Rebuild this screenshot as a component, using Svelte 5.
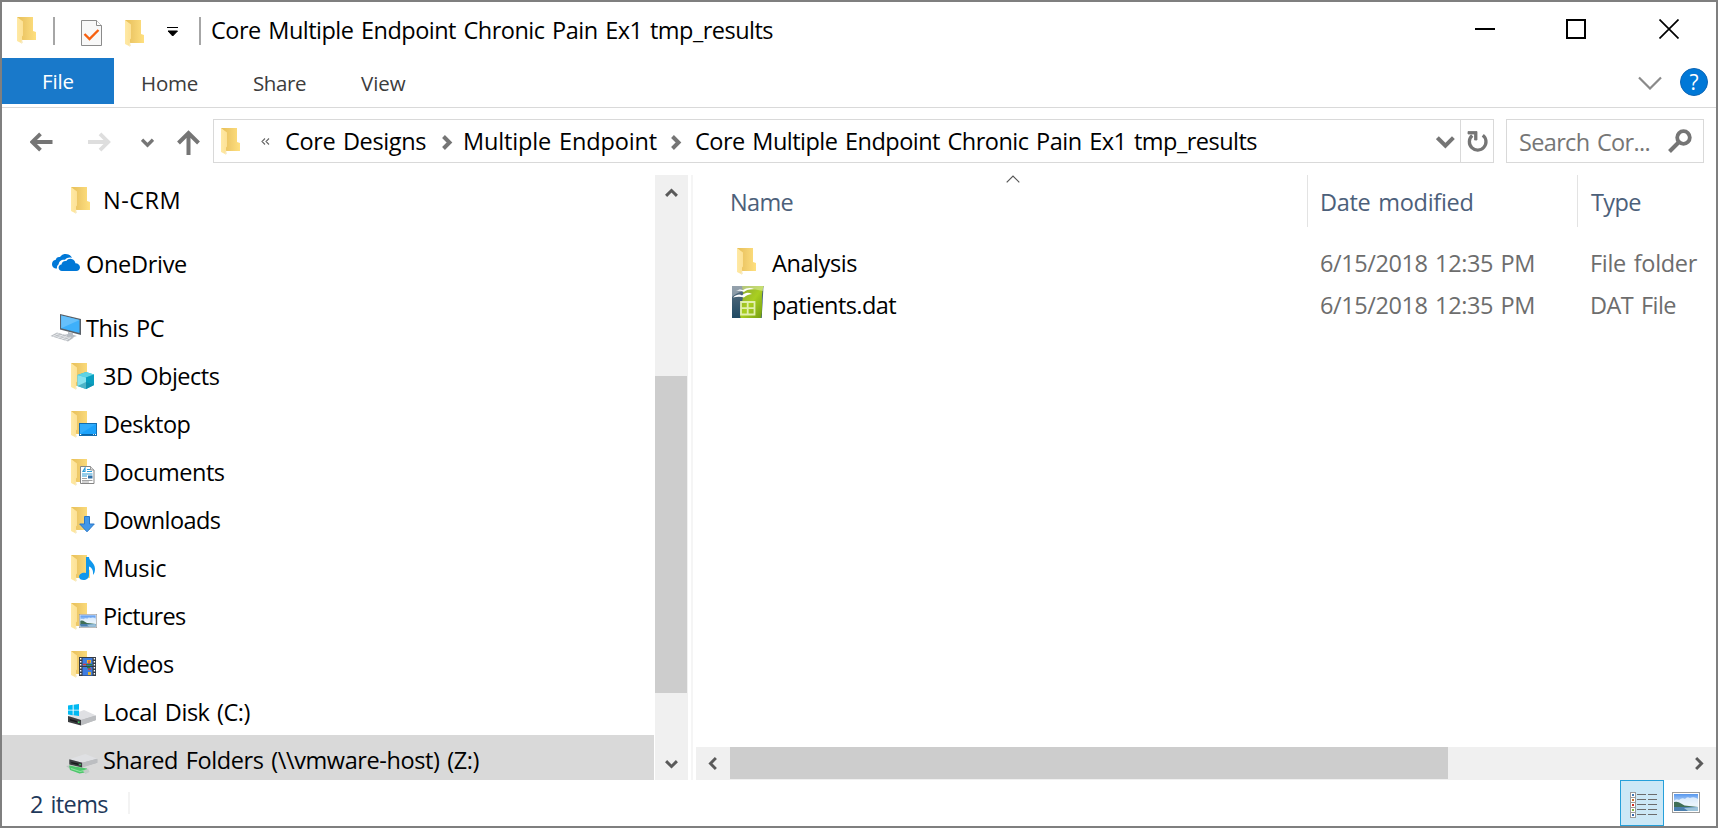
<script>
  const tree = [
    { name: 'N-CRM', icon: 'folder', level: 1, width: 78 },
    { name: 'OneDrive', icon: 'onedrive', level: 0, width: 101, gap: true },
    { name: 'This PC', icon: 'pc', level: 0, width: 78, gap: true },
    { name: '3D Objects', icon: 'objects', level: 1, width: 116.5 },
    { name: 'Desktop', icon: 'desktop', level: 1, width: 87.5 },
    { name: 'Documents', icon: 'documents', level: 1, width: 121.5 },
    { name: 'Downloads', icon: 'downloads', level: 1, width: 117.5 },
    { name: 'Music', icon: 'music', level: 1, width: 63.5 },
    { name: 'Pictures', icon: 'pictures', level: 1, width: 82.5 },
    { name: 'Videos', icon: 'videos', level: 1, width: 71 },
    { name: 'Local Disk (C:)', icon: 'disk', level: 1, width: 147 },
    { name: 'Shared Folders (\\\\vmware-host) (Z:)', icon: 'netdisk', level: 1, width: 376, selected: true }
  ];

  const files = [
    { name: 'Analysis', icon: 'folder', width: 85, date: '6/15/2018 12:35 PM', type: 'File folder', typeWidth: 107 },
    { name: 'patients.dat', icon: 'calc', width: 124, date: '6/15/2018 12:35 PM', type: 'DAT File', typeWidth: 86 }
  ];

  // Tracks a label in or out so that it takes the given advance width.
  function fit(node, width) {
    const count = node.textContent.length;
    const natural = node.getBoundingClientRect().width;
    node.style.letterSpacing = `${(width - natural) / count}px`;
  }
</script>

{#snippet scene(x, y, w, h)}
  <svg {x} {y} width={w} height={h} viewBox="0 0 28 21" preserveAspectRatio="none">
    <rect x=".5" y=".5" width="27" height="20" fill="#fff" stroke="#9b9b9b" />
    <rect x="2" y="2" width="24" height="17" fill="url(#sky)" />
    <path d="M2 9q2-3 5-1q3-3 6-1q2-3 5-1q4-2 8 1v8H2z" fill="#eef6fd" opacity=".8" />
    <path d="M2 10q4-1 7 1.500t8 2.500l9 1v1.500H2z" fill="#3f6f56" />
    <path d="M2 15h24v4H2z" fill="#4a7fae" />
    <path d="M12 16l14-1v4H16z" fill="#9cc3da" />
  </svg>
{/snippet}

{#snippet folder()}
  <path d="M5 4h16v14l3 1v8H9z" fill="url(#folderBack)" />
  <path d="M5 4l6 4.5v14l-1 1v7L5 28z" fill="url(#folderFront)" />
  <path d="M10 26l1 4-2 .6z" fill="#f7eccb" />
{/snippet}

{#snippet drive()}
  <path d="M2 22l16-6 12 5v4l-15 5-13-4z" fill="#b5b7ba" />
  <path d="M2 21l16-6 12 5.500-15 4.500z" fill="#dfe0e3" />
  <path d="M2 21l13 4v5.500L2 27z" fill="#3b3d40" />
  <path d="M15 25l15-4.500V25l-15 5.500z" fill="#bcbec1" />
  <path d="M4 24l7 2v1.500l-7-2z" fill="#17191b" />
  <path d="M12 26.500h1.500v1.500H12z" fill="#35d95b" />
{/snippet}

{#snippet icon(kind)}
  <svg class="icon" width="32" height="32" viewBox="0 0 32 32" aria-hidden="true">
    {#if kind === 'onedrive'}
      <path d="M8 21.500c-3.500 0-5-2-5-4.500 0-2.200 1.600-4 3.800-4.200C7 10.600 8.900 9.600 11 10c1.300-2 3.500-3 5.700-3 3 0 5.300 1.500 6.300 4-2.700-1-5.200-.2-7 1.700-3.500-.5-6.200 1.600-6.300 4.600-1.300.8-2 2.300-1.700 4.200z" fill="#0078d7" />
      <path d="M13 24c-2 0-3.400-1.400-3.400-3.200 0-1.700 1.200-3 2.900-3.200.1-2.500 2.400-4.100 4.800-3.600 1.200-1.800 3.200-2.600 5.200-2.100 2.200.4 3.700 2.200 3.900 4.400 2.600.1 4.600 1.700 4.600 4 0 2.100-1.600 3.700-3.700 3.700z" fill="#0078d7" />
    {:else if kind === 'pc'}
      <path d="M11 3l21 5v16L11 18.500z" fill="#596068" />
      <path d="M12.200 4.600l18.300 4.500v13L12.200 17.300z" fill="#3eb0fb" />
      <path d="M12.200 4.600l18.300 4.500-18.300 8.200z" fill="#66c0fb" />
      <path d="M19 21l5 1.200v1.500l4 1.300-5 1.500-8-2.500 4-1z" fill="#b6bcc3" />
      <path d="M8 21.500l17 5-6 4L1.500 25z" fill="#b9bdc2" />
      <path d="M7 23.200l14 4.200M4.500 24.500l14 4.300M10 22l-6 3.500M14 23.500l-6 4M18 24.700l-6 4M22 26l-6 4" stroke="#f4f5f6" stroke-width=".6" fill="none" />
    {:else if kind === 'disk'}
      {@render drive()}
      <path d="M2 10.500l4.700-.7v4.900H2zM7.600 9.700L13 9v5.700H7.600zM2 15.500h4.700v4.800L2 19.600zM7.600 15.500H13V21l-5.400-.7z" fill="#00b9f2" />
    {:else if kind === 'netdisk'}
      <path d="M0 23l6-1 3 4-3 1.500z" fill="#bcc5c1" />
      <path d="M3 22.500l18 3 .5 3.500-8 1.500L4 27z" fill="#4dc66b" />
      <path d="M5 25.500l9 3 6-1.500" stroke="#8fe49f" stroke-width="1.200" fill="none" />
      <path d="M17 28l5-2.500 1.500 3.500-4 2z" fill="#c3cbc8" />
      <g transform="translate(1.300 -2) scale(1 .87)">{@render drive()}</g>
    {:else if kind === 'calc'}
      <path d="M0 0h31.500l-1.800 32H0z" fill="url(#calcDark)" />
      <path d="M10 0h21.500c-1 5-1.600 7-1.600 12 0 6 .6 14-.9 20H8.500C7 25 9 19 10.500 14c1-4 .5-9-.5-14z" fill="url(#calcGreen)" />
      <path d="M0 0h31v5C20 1.500 8 4 0 11z" fill="#fff" opacity=".35" />
      <path d="M4 5c3-2 5-2 7-.8 3-2 7-3 11-1.200-5 0-8 1-10 3C9 4.500 7 4.500 4 5zM1 11.500c4-3.500 7-3.500 9-2C13 6.500 16 6 20 8c-4 .5-6 1.500-8 3.500-3-1-7-1-11 0z" fill="#fff" />
      <path d="M9 16h13.500v12.500H9zM9 22.200h13.500M15.700 16v12.500" fill="none" stroke="#e2f0ae" stroke-width="1.800" />
    {:else}
      {@render folder()}
      {#if kind === 'objects'}
        <path d="M11.500 16l8.500-3 8 2.500V26l-8 4-8.500-3z" fill="#22b5cf" />
        <path d="M11.500 16l8.500-3 8 2.500-8 3z" fill="#5fd3e4" />
        <path d="M11.500 16l8.500 2.500V30l-8.500-3z" fill="#88e2ef" />
        <path d="M20 18.500l8-3V26l-8 4z" fill="#0a9fc0" />
        <path d="M11.500 27l8.500-4 8 3-8 4z" fill="#14839f" opacity=".5" />
      {:else if kind === 'desktop'}
        <rect x="13.500" y="16.500" width="17" height="12" fill="#1ca2fb" stroke="#126db0" />
        <path d="M14 17h16L14 27z" fill="#44b5fd" opacity=".55" />
        <path d="M14 27.500h16" stroke="#0a66a8" />
        <path d="M14 27.500h1.200M27 27.500h.8M29 27.500h1" stroke="#fff" />
      {:else if kind === 'documents'}
        <path d="M14.500 11.500h10l3.500 3.500v13.500H14.500z" fill="#fff" stroke="#858585" />
        <path d="M24.500 11.500V15H28" fill="#ddd" stroke="#858585" stroke-width=".8" />
        <path d="M16.500 17l2.500-4v3.500h-2M21 14.500h3M21 16.500h5M16 19h10.500M16 21h5" stroke="#2c9bd6" fill="none" stroke-width="1.100" />
        <path d="M22 20.500h4.500v3H22z" fill="#3273a9" />
        <path d="M16 23.500h5M16 25.500h10.500M16 27h7" stroke="#9a9a9a" stroke-width=".9" />
      {:else if kind === 'downloads'}
        <path d="M18.500 13.500h5V21h4.800L21 28.800 13.700 21h4.800z" fill="#4297e8" stroke="#2877c9" />
      {:else if kind === 'music'}
        <path d="M20 6h3c0 4 6 5.500 6 12 0 2.500-.7 4.500-2 6 .5-4.500-.7-7-4-8.500V24c0 3.200-2.500 5-5.500 5-2.500 0-4.500-1.300-4.500-3.300 0-2.700 3.500-4.700 7-3.700z" fill="#0f97ec" />
      {:else if kind === 'pictures'}
        {@render scene(13, 15, 18, 14)}
      {:else if kind === 'videos'}
        <rect x="13" y="10" width="17" height="19" fill="#343b45" />
        <rect x="16.500" y="11" width="10" height="8" fill="#3f7de0" />
        <rect x="16.500" y="20" width="10" height="8.500" fill="#3f7de0" />
        <path d="M14.700 11v18M28.400 11v18" stroke="#fff" stroke-width="1.400" stroke-dasharray="1.500 1.500" />
        <path d="M21 13h4v3h-4zM22 25h3v3h-3z" fill="#e8b52d" />
        <path d="M17 17.500h4M23 13.500v4M22 22h3" stroke="#d93a34" stroke-width="1.300" />
        <path d="M20 17.800h6M21 20.500h3" stroke="#287f41" stroke-width="1.400" />
      {/if}
    {/if}
  </svg>
{/snippet}

{#snippet chevron(rotation, w, size)}
  <svg class="chevron" width={size} height={size} viewBox="0 0 12 12" aria-hidden="true">
    <path d="M1 3.800L6 8.800l5-5" transform="rotate({rotation} 6 6)" fill="none" stroke="currentColor" stroke-width={w} />
  </svg>
{/snippet}

<svg class="defs" width="0" height="0" aria-hidden="true">
  <defs>
    <linearGradient id="folderBack"><stop offset="0" stop-color="#e8bf56" /><stop offset=".45" stop-color="#f0cc6c" /><stop offset="1" stop-color="#ffe07f" /></linearGradient>
    <linearGradient id="folderFront"><stop offset="0" stop-color="#ffe9a4" /><stop offset="1" stop-color="#fce196" /></linearGradient>
    <linearGradient id="sky" x2="0" y2="1"><stop offset="0" stop-color="#5797ee" /><stop offset=".6" stop-color="#d4e9fb" /></linearGradient>
    <linearGradient id="calcDark" x2="0" y2="1"><stop offset="0" stop-color="#5c6f80" /><stop offset="1" stop-color="#1f4a63" /></linearGradient>
    <linearGradient id="calcGreen" x2="1" y2="1"><stop offset="0" stop-color="#8aa336" /><stop offset=".5" stop-color="#a9cf20" /><stop offset="1" stop-color="#6f9a0f" /></linearGradient>
  </defs>
</svg>

<div class="window">
  <header class="titlebar">
    <div class="quick-folder first">{@render icon('folder')}</div>
    <i class="bar"></i>
    <svg class="properties" width="22" height="29" viewBox="0 0 22 29" aria-hidden="true">
      <path d="M.5 2.500h15l5 5v20H.5z" fill="#f8f8f8" stroke="#8b8b8b" />
      <path d="M15.500 2.500V7.500h5" fill="#fff" stroke="#8b8b8b" />
      <path d="M3.500 16l5 5 9-9" fill="none" stroke="#f7600f" stroke-width="2.400" />
    </svg>
    <div class="quick-folder second">{@render icon('folder')}</div>
    <svg class="customize" width="12" height="10" viewBox="0 0 12 10" aria-hidden="true">
      <path d="M0 .500h11M1 4h9.500L5.700 9z" stroke="#000" stroke-width="1" />
    </svg>
    <i class="bar"></i>
    <h1 class="label"><span use:fit={562}>Core Multiple Endpoint Chronic Pain Ex1 tmp_results</span></h1>
    <div class="controls">
      <svg width="20" height="20" viewBox="0 0 20 20"><path d="M0 10h20" stroke="#000" stroke-width="2" /></svg>
      <svg width="20" height="20" viewBox="0 0 20 20"><path d="M1 1h18v18H1z" fill="none" stroke="#000" stroke-width="2" /></svg>
      <svg width="20" height="20" viewBox="0 0 20 20"><path d="M.5.500l19 19M19.500.500l-19 19" stroke="#000" stroke-width="1.700" /></svg>
    </div>
  </header>

  <nav class="ribbon">
    <button class="file"><span use:fit={32}>File</span></button>
    <button class="home"><span use:fit={57}>Home</span></button>
    <button class="share"><span use:fit={53}>Share</span></button>
    <button class="view"><span use:fit={44.5}>View</span></button>
    <svg class="expand" width="24" height="14" viewBox="0 0 24 14"><path d="M1 1.500l11 11 11-11" fill="none" stroke="#8a8a8a" stroke-width="2.200" /></svg>
    <span class="help">?</span>
  </nav>

  <div class="navbar">
    <svg class="arrow back" width="23" height="20" viewBox="0 0 23 20"><path d="M22.500 10H2.500M10.500 1.800L2.300 10l8.200 8.200" /></svg>
    <svg class="arrow forward" width="23" height="20" viewBox="0 0 23 20"><path d="M0 10h20M12 1.800l8.200 8.200-8.200 8.200" /></svg>
    <svg class="arrow recent" width="13" height="10" viewBox="0 0 13 10"><path d="M1 1.700l5.500 5.500L12 1.700" /></svg>
    <svg class="arrow up" width="24" height="25" viewBox="0 0 24 25"><path d="M11.500 25V3M1.500 13l10-10 10 10" /></svg>
    <div class="address">
      <div class="address-folder">{@render icon('folder')}</div>
      <svg class="more" width="9" height="7" viewBox="0 0 9 7"><path d="M4 .500L1 3.500l3 3M8 .500L5 3.500l3 3" fill="none" stroke="#666" stroke-width="1.100" /></svg>
      <span class="label crumb1"><span use:fit={141}>Core Designs</span></span>
      <svg class="arrow crumb-sep" width="11" height="15" viewBox="0 0 11 15"><path d="M1.500 1.500l6 6-6 6" /></svg>
      <span class="label crumb2"><span use:fit={194}>Multiple Endpoint</span></span>
      <svg class="arrow crumb-sep" width="11" height="15" viewBox="0 0 11 15"><path d="M1.500 1.500l6 6-6 6" /></svg>
      <span class="label crumb3"><span use:fit={562}>Core Multiple Endpoint Chronic Pain Ex1 tmp_results</span></span>
      <svg class="arrow history" width="19" height="13" viewBox="0 0 19 13"><path d="M1.400 1.700l8 8 8-8" /></svg>
      <div class="refresh">
        <svg width="21" height="22" viewBox="0 0 21 22"><path d="M15.800 4.200A8.300 8.300 0 1 1 5.200 4.500" fill="none" stroke="#757575" stroke-width="3.300" /><path d="M1 .500h9V9H7.500V3H1z" fill="#757575" stroke="#757575" stroke-width=".8" /></svg>
      </div>
    </div>
    <div class="search">
      <span class="label"><span use:fit={131}>Search Cor...</span></span>
      <svg width="24" height="24" viewBox="0 0 24 24"><circle cx="15.500" cy="8.500" r="6.300" fill="none" stroke="#757575" stroke-width="3.800" /><path d="M11 13L1.500 22.500" stroke="#757575" stroke-width="4" /></svg>
    </div>
  </div>

  <main>
    <aside>
      {#each tree as item}
        <div class="node" class:nested={item.level === 1} class:gap={item.gap} class:selected={item.selected}>
          {@render icon(item.icon)}
          <span class="label"><span use:fit={item.width}>{item.name}</span></span>
        </div>
      {/each}
    </aside>
    <div class="vscroll">
      <div class="step up-step">{@render chevron(180, 2.7, 13)}</div>
      <div class="thumb"></div>
      <div class="step down-step">{@render chevron(0, 2.7, 13)}</div>
    </div>
    <i class="splitter"></i>
    <section>
      <div class="columns">
        <div class="col name">
          <span class="label"><span use:fit={63}>Name</span></span>
          <svg class="sort" width="14" height="8" viewBox="0 0 14 8"><path d="M.7 7.300L7 1l6.300 6.300" fill="none" stroke="#555" stroke-width="1.200" /></svg>
        </div>
        <div class="col date"><span class="label"><span use:fit={153.500}>Date modified</span></span></div>
        <div class="col type"><span class="label"><span use:fit={50}>Type</span></span></div>
      </div>
      <div class="files">
        {#each files as file}
          <div class="file-row">
            <div class="cell name">{@render icon(file.icon)}<span class="label"><span use:fit={file.width}>{file.name}</span></span></div>
            <div class="cell date"><span class="label"><span use:fit={215}>{file.date}</span></span></div>
            <div class="cell type"><span class="label"><span use:fit={file.typeWidth}>{file.type}</span></span></div>
          </div>
        {/each}
      </div>
      <div class="hscroll">
        <div class="step start">{@render chevron(90, 2.7, 13)}</div>
        <div class="thumb"></div>
        <div class="step end">{@render chevron(-90, 2.7, 13)}</div>
      </div>
    </section>
  </main>

  <footer>
    <span class="label"><span use:fit={78}>2 items</span></span>
    <i class="status-sep"></i>
    <button class="view-button active" aria-label="Details">
      <svg width="28" height="27" viewBox="0 0 28 27">
        {#each ['#3f78b5', '#c66d28', '#cf2c20', '#7fb33f', '#3569ad'] as color, i}
          <rect x=".5" y={0.5 + i * 5} width="5" height="5" fill="#fff" stroke="#9b9b9b" />
          <rect x="2" y={2 + i * 5} width="2" height="2" fill={color} />
          <path d="M7 {2.5 + i * 5}h9M18 {2.5 + i * 5}h9" stroke="#6c6c6c" />
        {/each}
      </svg>
    </button>
    <button class="view-button" aria-label="Large icons">
      <svg width="28" height="21" viewBox="0 0 28 21">{@render scene(0, 0, 28, 21)}</svg>
    </button>
  </footer>
</div>

<style>
  :global(body) { margin: 0; background: #fff; }
  .defs { position: absolute; }
  .window {
    box-sizing: border-box;
    width: 1718px;
    height: 828px;
    border: 2px solid #7f7f7f;
    background: #fff;
    color: #000;
    display: flex;
    flex-direction: column;
    overflow: hidden;
    font-family: "Open Sans", "Noto Sans", sans-serif;
    font-size: 23.5px;
    line-height: 32px;
    word-spacing: 2px;
  }
  svg { display: block; flex: none; }
  i { display: block; flex: none; }
  button { font: inherit; color: inherit; border: 0; background: none; padding: 0; margin: 0; text-align: left; }
  .label { flex: none; white-space: pre; padding-top: 2px; }
  .icon { flex: none; }

  .titlebar { height: 56px; flex: none; display: flex; align-items: flex-start; }
  .quick-folder { width: 32px; }
  .quick-folder.first { margin: 11px 0 0 10px; }
  .bar { width: 2px; height: 28px; margin-top: 15px; background: #a6a6a6; }
  .quick-folder.first + .bar { margin-left: 9px; }
  .properties { margin: 16px 0 0 26px; }
  .quick-folder.second { margin: 14px 0 0 17px; }
  .customize { margin: 25px 0 0 15px; }
  .customize + .bar { margin-left: 20px; }
  h1 { font: inherit; margin: 10px 0 0 10px; }
  .controls { margin: 17px 37px 0 auto; display: flex; }
  .controls svg + svg { margin-left: 71px; }
  .controls svg + svg + svg { margin-left: 73px; }

  .ribbon { height: 49px; flex: none; display: flex; border-bottom: 1px solid #d9d9d9; font-size: 20.5px; line-height: 48px; color: #3c3c3c; }
  .file { width: 112px; height: 46px; background: #1979ca; color: #fff; padding-left: 40px; line-height: 47px; }
  .home { margin-left: 27px; width: 112px; }
  .share { width: 108px; }
  .expand { margin: 18px 18px 0 auto; }
  .help { width: 28px; height: 28px; margin: 10px 8px 0 0; border-radius: 50%; box-sizing: border-box; border: 1px solid #0c65b5; background: #0078d7; color: #fff; text-align: center; line-height: 27px; font-size: 21px; }

  .navbar { height: 67px; flex: none; display: flex; box-sizing: border-box; padding-top: 11px; }
  .arrow { fill: none; stroke: #757575; stroke-width: 4; }
  .back { margin: 13px 0 0 28px; }
  .forward { margin: 13px 0 0 35px; stroke: #dedede; }
  .recent { margin: 19px 0 0 30px; }
  .up { margin: 11px 0 0 23px; }
  .back, .forward { stroke-width: 3.8; }
  .recent { stroke-width: 3.4; }
  .address { box-sizing: border-box; width: 1281px; height: 44px; border: 1px solid #d9d9d9; margin-left: 12px; display: flex; align-items: center; }
  .address-folder { width: 32px; margin: -2px 0 0 2px; }
  .more { margin: 0 0 0 13px; }
  .crumb1 { width: 140px; margin-left: 15px; padding-top: 0; }
  .crumb2 { width: 194px; margin-left: 10px; padding-top: 0; }
  .crumb3 { margin-left: 13px; padding-top: 0; }
  .crumb-sep { margin: 2px 0 0 17px; }
  .crumb2 + .crumb-sep { margin-left: 14px; }
  .history { margin: 3px 5px 0 auto; }
  .refresh { width: 33px; height: 42px; border-left: 1px solid #d9d9d9; display: flex; align-items: center; justify-content: center; padding-top: 2px; box-sizing: border-box; }
  .search { box-sizing: border-box; width: 198px; height: 44px; border: 1px solid #d9d9d9; margin-left: 12px; display: flex; align-items: center; justify-content: space-between; padding: 0 11px 0 12px; color: #767676; }
  .search .label { padding-top: 2px; }

  main { height: 605px; flex: none; display: flex; }
  aside { width: 652px; overflow: hidden; flex: none; }
  .node { height: 48px; display: flex; align-items: center; padding-left: 47px; }
  .nested { padding-left: 64px; }
  .gap { margin-top: 16px; }
  .selected { background: #d9d9d9; }
  .node .label { margin-left: 5px; }
  .vscroll { width: 33px; margin-left: 1px; background: #f0f0f0; flex: none; display: flex; flex-direction: column; color: #5a5a5a; }
  .step { display: flex; align-items: center; justify-content: center; box-sizing: border-box; }
  .vscroll .step { padding-right: 1px; }
  .up-step { height: 201px; align-items: flex-start; padding-top: 12px; }
  .vscroll .thumb { width: 32px; height: 317px; background: #cdcdcd; }
  .down-step { flex: 1; align-items: flex-end; padding-bottom: 10px; }
  .splitter { width: 2px; margin-left: 3px; background: #f5f5f5; }
  section { flex: 1; min-width: 0; display: flex; flex-direction: column; }
  .columns { height: 52px; display: flex; color: #4c607a; flex: none; }
  .col { box-sizing: border-box; padding-top: 9px; }
  .col.name { width: 614px; padding-left: 37px; display: flex; }
  .sort { margin: -9px 0 0 213px; }
  .col.date { width: 270px; border-left: 1px solid #e3e3e3; padding-left: 12px; }
  .col.type { flex: 1; border-left: 1px solid #e3e3e3; padding-left: 13px; }
  .col .label { display: block; }
  .files { padding-top: 12px; flex: 1; }
  .file-row { height: 42px; display: flex; color: #6d6d6d; }
  .cell { display: flex; align-items: center; }
  .cell .label { padding-top: 5px; }
  .cell.name { width: 575px; padding-left: 39px; color: #000; }
  .cell.name .label { margin-left: 8px; }
  .cell.date { width: 257px; padding-left: 13px; }
  .cell.type { padding-left: 13px; }
  .hscroll { height: 33px; margin-left: 3px; background: #f0f0f0; display: flex; flex: none; color: #5a5a5a; }
  .hscroll .step { width: 34px; }
  .hscroll .thumb { width: 718px; height: 32px; background: #cdcdcd; }
  .hscroll .end { margin-left: auto; padding-right: 1px; }

  footer { height: 46px; flex: none; display: flex; color: #1e395b; }
  footer .label { margin: 6px 0 0 28px; width: 98px; }
  .status-sep { width: 2px; height: 22px; background: #f3f3f3; margin-top: 12px; }
  .view-button { width: 44px; height: 46px; box-sizing: border-box; display: flex; padding: 12px 0 0 8px; }
  .view-button.active { margin-left: auto; background: #cce8f6; border: 1px solid #26a0da; padding: 11px 0 0 9px; }
  .view-button:last-child { width: 52px; }
</style>
